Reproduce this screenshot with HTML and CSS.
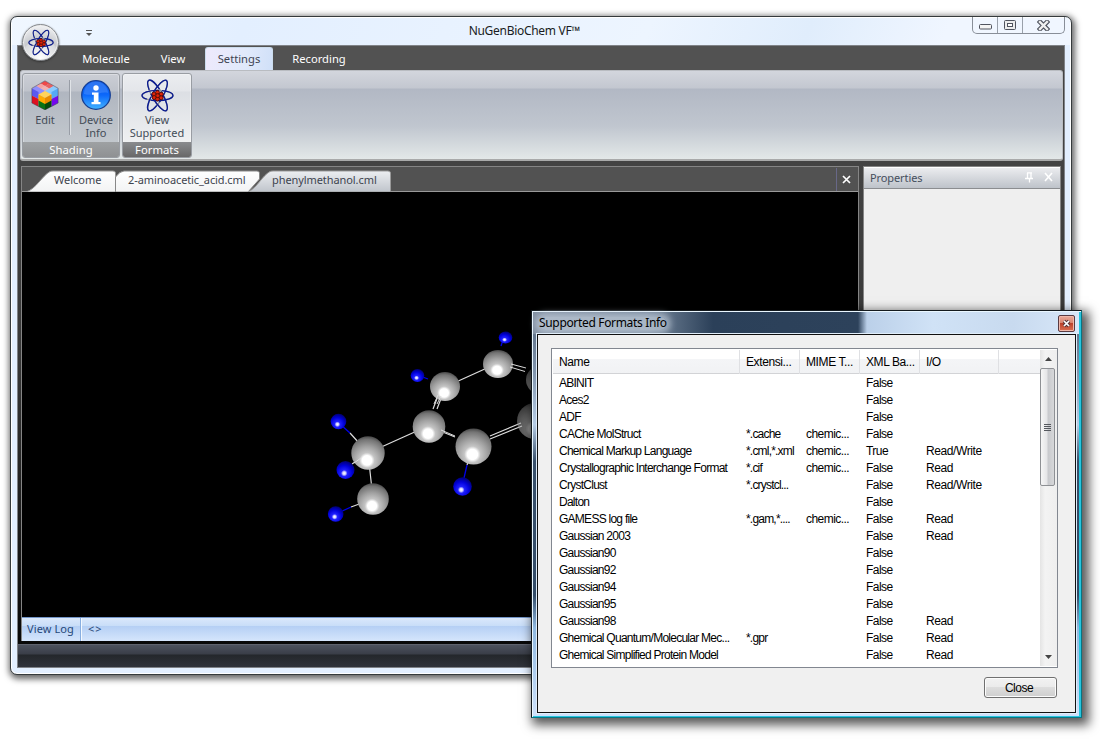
FILE: index.html
```html
<!DOCTYPE html>
<html lang="en">
<head>
<meta charset="utf-8">
<title>NuGenBioChem VF</title>
<link rel="stylesheet" href="styles.css">
</head>
<body>
<svg class="defs" width="0" height="0">
  <symbol id="atom" viewBox="0 0 32 32">
    <g fill="none" stroke-width="1.3">
      <g stroke="#8c8c94"><ellipse cx="16" cy="16" rx="15" ry="5"/><ellipse cx="16" cy="16" rx="17" ry="5" transform="rotate(60 16 16)"/><ellipse cx="16" cy="16" rx="17" ry="5" transform="rotate(-60 16 16)"/></g>
      <g stroke="#0b1c92" stroke-dasharray="23 4 24 3"><ellipse cx="16" cy="16" rx="15" ry="5"/><ellipse cx="16" cy="16" rx="17" ry="5" transform="rotate(60 16 16)"/><ellipse cx="16" cy="16" rx="17" ry="5" transform="rotate(-60 16 16)"/></g>
    </g>
    <g fill="#e02408" stroke="#4c0500" stroke-width=".8"><circle cx="12.500" cy="14.500" r="1.900"/><circle cx="16" cy="13" r="1.900"/><circle cx="19.700" cy="14.700" r="1.900"/><circle cx="12.800" cy="18" r="1.900"/><circle cx="19.600" cy="18.300" r="1.900"/><circle cx="16" cy="19.400" r="1.900"/><circle cx="16.200" cy="16.200" r="1.900"/></g>
  </symbol>
</svg>

<div class="window main">
  <header class="titlebar">
    <svg class="quick" width="8" height="7"><path d="M1 .5h6" stroke="#555"/><path d="M1 3h6L4 6z" fill="#555"/></svg>
    <span class="apptitle">NuGenBioChem VF™</span>
    <div class="caption">
      <span><svg width="13" height="6"><rect x=".5" y=".5" width="12" height="4.5" rx="1" fill="#f4f4f4" stroke="#50545f"/></svg></span>
      <span><svg width="12" height="10"><rect x=".5" y=".5" width="11" height="9" rx="1" fill="#ededed" stroke="#50545f"/><rect x="3.5" y="3.5" width="5" height="3" fill="#fff" stroke="#50545f"/></svg></span>
      <span><svg width="13" height="11"><path d="m3 2 7 7m0-7-7 7" stroke="#50545f" stroke-width="4.600" stroke-linecap="square"/><path d="m3 2 7 7m0-7-7 7" stroke="#f0f0f0" stroke-width="2.400" stroke-linecap="square"/></svg></span>
    </div>
  </header>
  <div class="frame">
    <nav class="menu">
      <span class="m1">Molecule</span><span class="m2">View</span><span class="m3 active">Settings</span><span class="m4">Recording</span>
    </nav>
    <section class="ribbon">
      <div class="group shading">
        <div class="tools">
          <div class="tool edit">
            <svg width="28" height="30" viewBox="0 0 28 30">
              <path d="M14 1 18.300 3.500 14 6 9.700 3.500z" fill="#f04848"/><path d="M9.700 3.500 14 6 9.700 8.500 5.300 6z" fill="#f8a0a0"/><path d="M18.300 3.500 22.700 6 18.300 8.500 14 6z" fill="#e86060"/><path d="M14 6 18.300 8.500 14 11 9.700 8.500z" fill="#f4b0b0"/>
              <path d="M1.500 8.200 5.300 6 14 11 8 14.500 1.500 11z" fill="#8f8dfb"/><path d="M22.700 6 27 8.500v6L20.500 14.500 14 11z" fill="#8ccbfd"/>
              <path d="M1 8.500 7.500 12v7L1 15.800z" fill="#5a5af0"/><path d="M27 8.500 20.500 12v7L27 15.800z" fill="#55aaf6"/>
              <path d="M1 15.800 7.500 19v7.500L1 23z" fill="#dd1020"/><path d="M27 15.800 20.500 19v7.500L27 23z" fill="#7508ee"/>
              <path d="M7.500 19 14 22.500V30L7.500 26.500z" fill="#087215"/><path d="M20.500 19 14 22.500V30l6.500-3.500z" fill="#064a0c"/>
              <path d="M14 11 20.500 14.500 14 18 7.500 14.500z" fill="#ffd45a"/><path d="M7.500 14.500 14 18v6l-6.500-3.500z" fill="#ffab00"/><path d="M20.500 14.500 14 18v6l6.500-3.500z" fill="#e98b00"/>
              <path d="M14 .8 27.200 8.300V23L14 29.800.8 23V8.300z" fill="none" stroke="#343048" stroke-width=".7" opacity=".65"/>
            </svg>
            <b>Edit</b>
          </div>
          <i class="rule"></i>
          <div class="tool device">
            <svg width="30" height="30" viewBox="0 0 30 30"><defs><linearGradient id="info" x2="0" y2="1"><stop offset="0" stop-color="#0a58e8"/><stop offset=".5" stop-color="#0c68fb"/><stop offset="1" stop-color="#43b4ff"/></linearGradient></defs><circle cx="15" cy="15" r="14.300" fill="url(#info)" stroke="#173f93" stroke-width="1.300"/><path d="M3 14a12 12 0 0 1 24-1C20 11 13 17 3 14z" fill="#6aa4ff" opacity=".35"/><circle cx="15" cy="8" r="2.700" fill="#fff"/><path d="M11 12.500h6.500V22h2v2.200h-9V22h2.300v-7.300H11z" fill="#fff"/></svg>
            <b>Device<br>Info</b>
          </div>
        </div>
        <footer>Shading</footer>
      </div>
      <div class="group formats">
        <div class="tools">
          <div class="tool view"><svg width="33" height="33"><use href="#atom"/></svg><b>View<br>Supported</b></div>
        </div>
        <footer>Formats</footer>
      </div>
    </section>
    <div class="dock">
      <section class="docs">
        <div class="tabs">
          <svg class="tabshapes" width="836" height="25">
            <defs><linearGradient id="tab" x2="0" y2="1"><stop offset="0" stop-color="#fff"/><stop offset="1" stop-color="#f2f3f4"/></linearGradient><linearGradient id="tabcur" x2="0" y2="1"><stop offset="0" stop-color="#eceef1"/><stop offset="1" stop-color="#bfc4cb"/></linearGradient></defs>
            <path d="M4 25C14 22 20 9 28 4.500Q29 4 31 4H91Q93.500 4 93.500 6V25z" fill="url(#tab)" stroke="#999"/>
            <path d="M93.500 25V10Q98 4 102 4H235Q237.500 4 237.500 6V12L226 25z" fill="url(#tab)" stroke="#888"/>
            <path d="M226 25C235 21 240 9 248 4.500Q249 4 251 4H366Q368.500 4 368.500 6V25z" fill="url(#tabcur)" stroke="#999"/>
          </svg>
          <span class="t1">Welcome</span><span class="t2">2-aminoacetic_acid.cml</span><span class="t3">phenylmethanol.cml</span>
          <i class="tabclose"><svg width="9" height="9"><path d="M1 1l7 7M8 1 1 8" stroke="#fff" stroke-width="1.700"/></svg></i>
        </div>
        <svg class="molecule" width="836" height="425" viewBox="22 192 836 425">
          <defs>
            <radialGradient id="c" cx=".47" cy=".72" r=".76"><stop offset="0" stop-color="#fff"/><stop offset=".19" stop-color="#fff"/><stop offset=".3" stop-color="#c4c4c4"/><stop offset=".55" stop-color="#a0a0a0"/><stop offset=".82" stop-color="#747474"/><stop offset="1" stop-color="#363636"/></radialGradient>
            <radialGradient id="h" cx=".43" cy=".68" r=".72"><stop offset="0" stop-color="#fff"/><stop offset=".12" stop-color="#d0d0ff"/><stop offset=".25" stop-color="#2020ff"/><stop offset=".6" stop-color="#0000d8"/><stop offset="1" stop-color="#000060"/></radialGradient>
          </defs>
          <g stroke="#ddd" stroke-width="1.200">
            <path d="M498 363 445 387M428 426 368 453M428 426 455 437M350 433 368 453M368 453 373 499M351 507 373 499M474 446 467 465M352 464 368 453"/>
            <path d="M438 396 433 409M442 396 437 409M490 436 521 423M490 439 522 426"/>
          </g>
          <path d="M340 424 350 433M338 513 351 507M467 465 464 478M420 376 428 379M503 340 501 346" stroke="#0000e8" stroke-width="1.300"/>
          <g fill="url(#h)"><ellipse cx="505.500" cy="337.500" rx="6.800" ry="6"/><ellipse cx="417.500" cy="375.500" rx="6.800" ry="6.500"/><circle cx="338.500" cy="421.500" r="7.800"/><circle cx="335.700" cy="514" r="7.800"/><circle cx="462.500" cy="486.500" r="9.300"/></g>
          <g fill="url(#c)"><ellipse cx="498" cy="364" rx="15" ry="14"/><ellipse cx="445" cy="386.500" rx="15" ry="14.500"/><circle cx="429" cy="426.500" r="16.300"/><circle cx="473.500" cy="446.500" r="18"/><circle cx="368" cy="453" r="16.700"/><circle cx="373" cy="499" r="15.800"/></g>
          <g fill="url(#c)" opacity=".55"><circle cx="540" cy="380" r="14"/><circle cx="535" cy="421" r="18"/></g>
          <path d="M441 430 455 436M511 364 526 368M510 367 525 371.500M354 463 361 458M441 396 437 404M438 395 434 404" stroke="#ddd" stroke-width="1"/>
          <circle cx="345.500" cy="470" r="9" fill="url(#h)"/>
        </svg>
        <footer class="log"><span>View Log</span><span>&lt;&gt;</span></footer>
      </section>
      <aside class="props">
        <header><span>Properties</span><svg width="30" height="11"><path d="M3.500 1v5M7 1v5M3 .8h5M1 6.500h8M5.500 6.500v4" fill="none" stroke="#fff" stroke-width="1.300"/><path d="m21 1 7 8m0-8-7 8" stroke="#fff" stroke-width="1.600"/></svg></header>
      </aside>
    </div>
    <footer class="status"></footer>
  </div>
  <div class="orb"><svg width="26" height="27"><use href="#atom"/></svg></div>
</div>

<div class="window dialog">
  <header class="dlgtitle"><span>Supported Formats Info</span><i class="dlgclose"><svg width="9" height="9"><path d="m2 2 5 5m0-5L2 7" stroke="#50363a" stroke-width="3.500"/><path d="m2 2 5 5m0-5L2 7" stroke="#fff" stroke-width="1.700"/></svg></i></header>
  <div class="client">
    <div class="list">
      <div class="table">
        <div class="row head"><span>Name</span><span>Extensi...</span><span>MIME T...</span><span>XML Ba...</span><span>I/O</span></div>
        <div class="row"><span>ABINIT</span><span></span><span></span><span>False</span><span></span></div>
        <div class="row"><span>Aces2</span><span></span><span></span><span>False</span><span></span></div>
        <div class="row"><span>ADF</span><span></span><span></span><span>False</span><span></span></div>
        <div class="row"><span>CAChe MolStruct</span><span>*.cache</span><span>chemic...</span><span>False</span><span></span></div>
        <div class="row"><span>Chemical Markup Language</span><span>*.cml,*.xml</span><span>chemic...</span><span>True</span><span>Read/Write</span></div>
        <div class="row"><span>Crystallographic Interchange Format</span><span>*.cif</span><span>chemic...</span><span>False</span><span>Read</span></div>
        <div class="row"><span>CrystClust</span><span>*.crystcl...</span><span></span><span>False</span><span>Read/Write</span></div>
        <div class="row"><span>Dalton</span><span></span><span></span><span>False</span><span></span></div>
        <div class="row"><span>GAMESS log file</span><span>*.gam,*....</span><span>chemic...</span><span>False</span><span>Read</span></div>
        <div class="row"><span>Gaussian 2003</span><span></span><span></span><span>False</span><span>Read</span></div>
        <div class="row"><span>Gaussian90</span><span></span><span></span><span>False</span><span></span></div>
        <div class="row"><span>Gaussian92</span><span></span><span></span><span>False</span><span></span></div>
        <div class="row"><span>Gaussian94</span><span></span><span></span><span>False</span><span></span></div>
        <div class="row"><span>Gaussian95</span><span></span><span></span><span>False</span><span></span></div>
        <div class="row"><span>Gaussian98</span><span></span><span></span><span>False</span><span>Read</span></div>
        <div class="row"><span>Ghemical Quantum/Molecular Mec...</span><span>*.gpr</span><span></span><span>False</span><span>Read</span></div>
        <div class="row"><span>Ghemical Simplified Protein Model</span><span></span><span></span><span>False</span><span>Read</span></div>
      </div>
      <div class="scroll">
        <svg width="17" height="18"><path d="M5 11h7L8.500 7z" fill="#444"/></svg>
        <div class="thumb"><i></i><i></i><i></i><i></i></div>
        <svg class="down" width="17" height="18"><path d="M5 7h7l-3.500 4z" fill="#444"/></svg>
      </div>
    </div>
    <button class="close">Close</button>
  </div>
</div>
</body>
</html>
```

FILE: styles.css
```css
* { box-sizing: border-box; }
body { margin: 0; width: 1100px; height: 739px; overflow: hidden; position: relative; background: #fff; font: 11px/13px "Noto Sans", sans-serif; color: #333; }
.defs { position: absolute; }
svg { display: block; flex: none; }
.window { position: absolute; display: flex; flex-direction: column; }

/* Main window */
.main { left: 10px; top: 16px; width: 1062px; height: 659px; border: 1px solid #353a3c; border-radius: 7px; padding: 0 6px 6px; background: #e3efff; box-shadow: inset 0 0 0 1px #fff, 1px 2px 6px 2px rgba(0,0,0,.6); }
.titlebar { height: 27px; flex: none; margin: 1px -5px 0; padding: 0 5px 0 6px; display: grid; grid-template-columns: 1fr auto 1fr; align-items: start; background: linear-gradient(110deg, #f0f7ff 0, #e9f3ff 10%, #e3efff 22%, #edf5ff 60%, #e0edfc 75%, #f0f6ff 88%); border-radius: 5px 5px 0 0; }
.quick { margin: 12px 0 0 67px; }
.apptitle { font-size: 12px; line-height: 15px; margin: 5px 0 0 -34px; color: #181c22; letter-spacing: -.3px; }
.caption { justify-self: end; display: flex; height: 17px; margin: -1px 0 0; border: 1px solid #888e98; border-top: 0; border-radius: 0 0 5px 5px; }
.caption span { width: 25px; display: flex; align-items: center; justify-content: center; border-right: 1px solid #99a0aa; }
.caption span:first-child { padding-top: 4px; }
.caption span:last-child { width: 41px; border: 0; }
.frame { flex: 1; min-height: 0; display: flex; flex-direction: column; border: 1px solid #808388; background: #434343; }
.menu { height: 24px; flex: none; background: #525252; display: flex; align-items: flex-end; font-size: 11.2px; color: #fff; }
.menu span { height: 23px; line-height: 23px; text-align: center; }
.m1 { margin-left: 58px; width: 60px; }
.m2 { margin-left: 17px; width: 40px; }
.menu .active { margin-left: 12px; width: 68px; border: 1px solid #cde; border-bottom: 0; border-radius: 3px 3px 0 0; background: linear-gradient(100deg, #eeeafc, #e0e9fb 60%, #d0e0f8); color: #3d4452; line-height: 22px; }
.m4 { margin-left: 15px; width: 62px; }
.ribbon { height: 91px; flex: none; margin: 0 1px 0 2px; display: flex; gap: 2px; padding: 2px 1px; border: 1px solid #b9bcc1; border-bottom: 2px solid #a9aaaa; border-radius: 3px; background: linear-gradient(#d3d6dd, #c3c7d0 17px, #b2b8c4 18px, #c0c6cf 55px, #e3e8e8); }
.group { height: 85px; border: 1px solid #999da3; border-radius: 3px; box-shadow: inset 0 0 0 1px rgba(255,255,255,.3); display: flex; flex-direction: column; overflow: hidden; color: #444c57; }
.shading { width: 98px; background: linear-gradient(#cbced5, #bfc3cb 17px, #b0b6c0 18px, #c8cdd1); }
.formats { width: 70px; background: linear-gradient(#ebedf0, #e4e6ea 17px, #dcdfe4 18px, #f4f5f5); }
.tools { flex: 1; display: flex; }
.group b { font-weight: 400; text-align: center; letter-spacing: 0; }
.tool { display: flex; flex: none; flex-direction: column; align-items: center; gap: 3px; }
.edit { width: 44px; padding-top: 6px; }
.rule { flex: none; width: 2px; height: 55px; margin: 6px 0 0 2px; background: linear-gradient(90deg, #989da6 50%, #e0e3e7 50%); }
.device { width: 50px; padding-top: 6px; }
.view { width: 68px; padding-top: 5px; gap: 1px; }
.group > footer { height: 15px; line-height: 15px; background: linear-gradient(#9ea1a3, #8f9193); color: #fff; text-align: center; font-size: 11.3px; }
.formats > footer { background: linear-gradient(#898b8e, #686868); }

.dock { flex: 1; min-height: 0; display: flex; gap: 4px; padding: 5px 3px 3px 3px; background: linear-gradient(#434343, #383838 40%, #080808); }
.docs { width: 838px; display: flex; flex-direction: column; border: 1px solid #858585; }
.tabs { height: 25px; flex: none; position: relative; display: flex; align-items: center; background: #525252; border-bottom: 1px solid #999; color: #3e444e; padding-top: 1px; white-space: nowrap; }
.tabshapes { position: absolute; left: 0; top: 0; }
.tabs span { position: relative; }
.t1 { margin-left: 32px; width: 47px; }
.t2 { margin-left: 27px; width: 117px; letter-spacing: -.1px; }
.t3 { margin-left: 27px; width: 104px; letter-spacing: -.08px; }
.tabclose { margin-left: auto; padding: 7px 7px 7px 5px; border-left: 1px solid #686888; }
.molecule { background: #000; width: 836px; }
.log { height: 24px; flex: none; display: flex; line-height: 22px; border-top: 1px solid #7395c8; color: #264878; background: linear-gradient(#dae8fb, #c8ddf8 35%, #b5cff4 36%, #d5e5fc); }
.log span { padding: 0 6px 0 5px; border-right: 1px solid #88aee0; box-shadow: 1px 0 #f4f9ff; white-space: nowrap; letter-spacing: .1px; }
.log span + span { border: 0; box-shadow: none; padding-left: 7px; letter-spacing: 1px; }
.props { width: 198px; border: 1px solid #858585; background: #efefef; }
.props header { height: 22px; display: flex; justify-content: space-between; align-items: center; padding: 0 6px 2px; color: #454e5d; border-top: 1px solid #fff; border-bottom: 1px solid #8b8d90; background: linear-gradient(#ebecef, #bec3ca); letter-spacing: -.1px; }
.status { height: 23px; flex: none; border-top: 1px solid #5e626d; background: linear-gradient(#4c515d, #3a3e48 9px, #24272b 10px, #30333b); }
.orb { position: absolute; left: 11px; top: 7px; width: 37px; height: 37px; border-radius: 50%; border: 1px solid #85888c; display: flex; align-items: center; justify-content: center; background: radial-gradient(circle at 50% 95%, #fff, #d9dbde 48%, #c7c9cd 52%, #f4f5f7 90%); box-shadow: inset 0 0 0 1px #eee, 0 1px 2px #333; }

/* Supported formats dialog */
.dialog { left: 531px; top: 310px; width: 551px; height: 408px; border: 1px solid #141a1e; border-right-color: #087583; border-bottom-color: #087583; padding: 0 5px 4px; background: linear-gradient(#52647a, #8195ad 15%, #b6cce5 28%, #38506b 37%, #334c68 70%, #8fb8e0 78%, #cfe2fb); box-shadow: inset 1px 1px #eaf7ff, inset -2px -1px #28c5df, 4px 4px 10px 3px rgba(0,0,0,.65); font: 12px/17px "Liberation Sans", Arial, sans-serif; color: #000; }
.dlgtitle { height: 22px; flex: none; margin: 1px -3px 0 -4px; padding: 0 4px 0 6px; display: flex; justify-content: space-between; align-items: center; background: linear-gradient(90deg, #8290a2, #75869a 115px, #2b4059 180px, #2d425b 325px, #bbd0e9 334px, #d0e2f6 400px, #c8daef 480px, #d8e7f8); font: 12px/15px "Noto Sans", sans-serif; }
.dlgtitle span { letter-spacing: -.33px; height: 13px; line-height: 12px; border-radius: 7px; background: rgba(200,212,224,.62); box-shadow: 0 0 6px 4px rgba(200,212,224,.62); }
.dlgclose { width: 17px; height: 17px; margin-top: 1px; display: flex; align-items: center; justify-content: center; border: 1px solid #593b42; border-radius: 2px; box-shadow: inset 0 0 0 1px #f0b8aa; background: linear-gradient(#e9aa9b, #d98570 45%, #bb422c 50%, #dc7052); }
.client { flex: 1; min-height: 0; width: 539px; border: 1px solid #101010; background: #f0f0f0; box-shadow: 0 0 0 1px #e1eefa; display: flex; flex-direction: column; align-items: flex-end; padding: 13px 17px 0 13px; }
.list { width: 507px; height: 320px; flex: none; border: 1px solid #828790; background: #fff; display: flex; padding: 1px 0 1px 1px; overflow: hidden; }
.table { width: 487px; }
.row { height: 17px; display: grid; grid-template-columns: 187px 60px 60px 60px 79px; white-space: nowrap; letter-spacing: -.55px; }
.row span { padding-left: 6px; }
.row span:first-child { letter-spacing: -.74px; }
.row span:nth-child(2) { letter-spacing: -.8px; }
.row span:nth-child(5) { letter-spacing: -.4px; }
.row.head { height: 24px; line-height: 24px; margin-bottom: 1px; border-bottom: 1px solid #d2d3d6; background: linear-gradient(#fff 40%, #f4f5f7 41%, #f1f2f4); }
.row.head span { border-right: 1px solid #dfe0e3; letter-spacing: -.4px; }
.scroll { width: 17px; display: flex; flex-direction: column; background: linear-gradient(90deg, #e4e4e4, #f3f3f3 30%, #eee); }
.thumb { height: 118px; width: 15px; margin: 0 2px 0 0; border: 1px solid #8e9094; border-radius: 2px; background: linear-gradient(90deg, #f6f6f6, #e5e5e7 45%, #c8c9cd 55%, #d7d8da); display: flex; flex-direction: column; justify-content: center; align-items: center; gap: 1px; }
.thumb i { width: 7px; height: 1px; background: #55585e; }
.down { margin-top: auto; }
.close { width: 73px; height: 21px; margin: 9px 1px 0 0; flex: none; padding: 1px 3px 0 0; border: 1px solid #707070; border-radius: 3px; box-shadow: inset 0 0 0 1px #fcfcfc; background: linear-gradient(#f2f2f2, #ebebeb 49%, #ddd 50%, #cfcfcf); font: 12px/18px "Liberation Sans", Arial, sans-serif; letter-spacing: -.5px; color: #000; }
```
